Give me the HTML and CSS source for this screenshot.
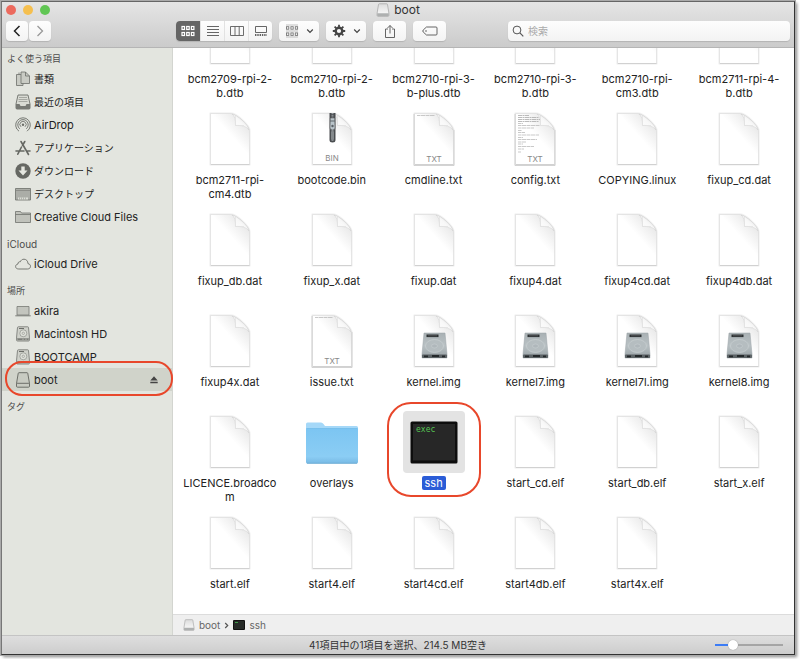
FILE: index.html
```html
<!DOCTYPE html>
<html lang="ja">
<head>
<meta charset="utf-8">
<title>boot</title>
<link rel="stylesheet" href="styles.css">
</head>
<body>
<svg class="defs" aria-hidden="true">
  <defs>
    <linearGradient id="gCorner" x1="0.55" y1="0.45" x2="0.85" y2="0.1">
      <stop offset="0" stop-color="#fff"/><stop offset="1" stop-color="#e6e6e6"/>
    </linearGradient>
    <linearGradient id="gFold" x1="0" y1="1" x2="1" y2="0">
      <stop offset="0" stop-color="#fff"/><stop offset="0.5" stop-color="#f8f8f8"/><stop offset="1" stop-color="#d8d8d8"/>
    </linearGradient>
    <linearGradient id="gDisk" x1="0" y1="0" x2="0" y2="1">
      <stop offset="0" stop-color="#a9b1b4"/><stop offset="0.5" stop-color="#b9c1c4"/><stop offset="1" stop-color="#98a1a5"/>
    </linearGradient>
    <linearGradient id="gFolder" x1="0" y1="0" x2="0" y2="1">
      <stop offset="0" stop-color="#7cc5f2"/><stop offset="0.8" stop-color="#8bcdf4"/><stop offset="1" stop-color="#77b9e4"/>
    </linearGradient>
    <linearGradient id="gDrive" x1="0" y1="0" x2="0" y2="1">
      <stop offset="0" stop-color="#dcdcdc"/><stop offset="1" stop-color="#fdfdfd"/>
    </linearGradient>
    <symbol id="doc" viewBox="0 0 62 62">
      <path d="M11.500 5.500H32C38 6 51 18 50.500 23V56.500H11.500Z" fill="none" stroke="#000" stroke-opacity=".05" stroke-width="2.500" stroke-linejoin="round"/>
      <path d="M11.500 5.500H32C38 6 51 18 50.500 23V56.500H11.500Z" fill="url(#gCorner)" stroke="#dcdcdc" stroke-width=".7"/>
      <path d="M12 56.500H50.500" stroke="#c8c8c8" stroke-width=".7"/>
      <path d="M33 6C36 8 36.500 12 36.500 17.500C42 17 48 18.500 50 22C49 16 38 7 33 6Z" fill="url(#gFold)" stroke="#cfcfcf" stroke-width=".5"/>
      <path d="M36.500 8V17.500H45" fill="none" stroke="#e2e2e2" stroke-width=".8"/>
    </symbol>
    <symbol id="txt" viewBox="0 0 62 62">
      <use href="#doc" width="62" height="62"/>
      <path d="M11 6V57.500H51V22" fill="none" stroke="#cacaca" stroke-width=".8"/>
      <text class="doc-kind" x="31" y="54" text-anchor="middle">TXT</text>
    </symbol>
    <symbol id="line" viewBox="0 0 62 62">
      <path d="M14 7.500H32" stroke="#bbb" stroke-width=".8" stroke-dasharray="3 .5 5 .5"/>
    </symbol>
    <symbol id="img" viewBox="0 0 62 62">
      <use href="#doc" width="62" height="62"/>
      <path d="M21 23H42L44 44V48H19V44Z" fill="url(#gDisk)" stroke="#9aa2a6" stroke-width=".5"/>
      <rect x="19" y="44.500" width="25" height="3.500" rx="1" fill="#5c6366"/>
      <path d="M21 46.300H25M29 46H36M39 46.300H42" stroke="#24292b" stroke-width="1.800"/>
      <rect x="23.500" y="24.500" width="12" height="2.600" fill="#2c3133"/>
      <path d="M25 25.800H34" stroke="#777" stroke-width=".5"/>
      <ellipse cx="31.500" cy="36" rx="9" ry="6.500" fill="#b5bdc0" stroke="#cdd3d5" stroke-width=".6"/>
      <ellipse cx="31.500" cy="36" rx="3" ry="2" fill="#afb7bb" stroke="#cdd3d5" stroke-width=".5"/>
    </symbol>
    <symbol id="drive" viewBox="0 0 14 14">
      <path d="M2.500 1.500Q2.600.8 3.300.8H10.700Q11.400.8 11.500 1.500L12.900 10.200V12.400Q12.900 13.300 12 13.300H2Q1.100 13.300 1.100 12.400V10.200Z" fill="url(#gDrive)" stroke="#aaa" stroke-width=".8"/>
      <path d="M1.200 10.200H12.800V12.500Q12.800 13.200 12 13.200H2Q1.200 13.200 1.200 12.500Z" fill="#aeb0b0"/>
    </symbol>
    <symbol id="hd" viewBox="0 0 16 16">
      <path d="M2.500 1.500Q2.600.8 3.300.8H12.700Q13.400.8 13.500 1.500L14.400 11V14.200Q14.400 15 13.600 15H2.400Q1.600 15 1.600 14.200V11Z" fill="#cfd1ca" stroke="#7c7e79" stroke-width=".9"/>
      <path d="M2 12H14V14.500H2Z" fill="#999b95"/>
      <path d="M4 2.500H9" stroke="#6c6e69"/>
      <circle cx="8.300" cy="7.300" r="3.500" fill="#dfe1da" stroke="#8d8f89" stroke-width=".7"/>
      <circle cx="8.300" cy="7.300" r="1.200" fill="none" stroke="#8d8f89" stroke-width=".6"/>
      <path d="M3 13.300H7M9 13.300H10M12 13.300H13" stroke="#6c6e69" stroke-width=".8"/>
    </symbol>
  </defs>
</svg>

<div class="window">
  <header class="chrome">
    <div class="titlebar">
      <div class="lights">
        <button class="light light-close" aria-label="閉じる"></button>
        <button class="light light-min" aria-label="しまう"></button>
        <button class="light light-zoom" aria-label="拡大"></button>
      </div>
      <h1 class="title"><svg width="14" height="14"><use href="#drive"/></svg>boot</h1>
    </div>
    <div class="toolbar">
      <div class="nav">
        <button class="tool tool-nav" aria-label="戻る"><svg width="22" height="20"><path d="M13.500 5L8.500 10L13.500 15" fill="none" stroke="#222" stroke-width="1.500"/></svg></button>
        <button class="tool tool-nav" aria-label="進む"><svg width="22" height="20"><path d="M8.500 5L13.500 10L8.500 15" fill="none" stroke="#999" stroke-width="1.300"/></svg></button>
      </div>
      <div class="views">
        <button class="view view-on" aria-label="アイコン"><svg width="14" height="12" fill="none" stroke="#fff" stroke-width="1.200"><rect x="1" y="1.500" width="2.500" height="3"/><rect x="5.700" y="1.500" width="2.500" height="3"/><rect x="10.400" y="1.500" width="2.500" height="3"/><rect x="1" y="7.500" width="2.500" height="3"/><rect x="5.700" y="7.500" width="2.500" height="3"/><rect x="10.400" y="7.500" width="2.500" height="3"/></svg></button>
        <button class="view" aria-label="リスト"><svg width="14" height="12"><path d="M1 1.500H13M1 4.500H13M1 7.500H13M1 10.500H13" stroke="#555" stroke-width=".9"/></svg></button>
        <button class="view" aria-label="カラム"><svg width="14" height="12"><path d="M.5 1.500H13.500V10.500H.5ZM5 1.500V10.500M9.200 1.500V10.500" fill="none" stroke="#5c5c5c" stroke-width=".9"/></svg></button>
        <button class="view" aria-label="ギャラリー"><svg width="14" height="12"><path d="M1.500 1.500H12.500V7.500H1.500Z" fill="none" stroke="#555" stroke-width=".9"/><path d="M1 10H13" stroke="#333" stroke-width="1.500" stroke-dasharray="1.400 .9"/></svg></button>
      </div>
      <button class="tool tool-menu" aria-label="グループ分け"><svg width="14" height="14" fill="none" stroke="#777" stroke-width=".9"><path d="M1 1H13M1 7H13M1 13H13" stroke="#aaa" stroke-width=".7"/><rect x="1.500" y="2.700" width="2.300" height="2.500"/><rect x="5.900" y="2.700" width="2.300" height="2.500"/><rect x="10.300" y="2.700" width="2.300" height="2.500"/><rect x="1.500" y="8.900" width="2.300" height="2.500"/><rect x="5.900" y="8.900" width="2.300" height="2.500"/><rect x="10.300" y="8.900" width="2.300" height="2.500"/></svg><svg width="8" height="6"><path d="M1.200 1.500L4 4.300L6.800 1.500" fill="none" stroke="#444" stroke-width="1.200"/></svg></button>
      <button class="tool tool-menu" aria-label="操作"><svg width="14" height="14"><circle cx="7" cy="7" r="3.300" fill="none" stroke="#444" stroke-width="2.400"/><path d="M7 .8V3M7 11V13.200M.8 7H3M11 7H13.200M2.600 2.600L4.200 4.200M9.800 9.800L11.400 11.400M2.600 11.400L4.200 9.800M9.800 4.200L11.400 2.600" stroke="#444" stroke-width="1.800"/></svg><svg width="8" height="6"><path d="M1.200 1.500L4 4.300L6.800 1.500" fill="none" stroke="#444" stroke-width="1.200"/></svg></button>
      <button class="tool tool-action" aria-label="共有"><svg width="12" height="15"><path d="M4 5H1.500V13.500H10.500V5H8M6 9.500V1.500M3.500 4L6 1.500L8.500 4" fill="none" stroke="#555" stroke-width=".9"/></svg></button>
      <button class="tool tool-action" aria-label="タグ"><svg width="16" height="10"><path d="M4.500 1H14Q15 1 15 2V8Q15 9 14 9H4.500L1.200 6Q.4 5 1.200 4Z" fill="none" stroke="#555" stroke-width=".9"/><circle cx="4" cy="5" r=".8" fill="#555"/></svg></button>
      <label class="search"><svg width="12" height="12"><circle cx="5" cy="5" r="3.900" fill="none" stroke="#555"/><path d="M7.900 7.900L11.300 11.300" stroke="#555" stroke-width="1.200"/></svg><input type="search" placeholder="検索" aria-label="検索"></label>
    </div>
  </header>

  <div class="body">
    <nav class="sidebar">
      <section>
        <h2 class="kana">よく使う項目</h2>
        <a href="#" class="kana"><svg width="16" height="16" fill="#c9cbc4" stroke="#6c6e69" stroke-width=".8"><path d="M1.500 3.500H8V14.500H1.500Z"/><path d="M6 1H10.500L14.500 5V12.500H6Z"/><path d="M10.500 1V5H14.500M4 3.500V1.500" fill="none"/></svg>書類</a>
        <a href="#" class="kana"><svg width="16" height="16"><path d="M3 1H13L15 10V14Q15 15 14 15H2Q1 15 1 14V10Z" fill="#d9dbd4" stroke="#6c6e69" stroke-width=".9"/><path d="M1 10H4.500L5.500 12H10.500L11.500 10H15V15H1Z" fill="#777974"/><path d="M4 3.500H12M3.500 5.500H12.500M3.500 7.500H12.500" stroke="#999b95" stroke-width=".8"/></svg>最近の項目</a>
        <a href="#"><svg width="16" height="16" fill="none" stroke="#6c6e69" stroke-width=".9"><path d="M4 14.200A7.300 7.300 0 1 1 12 14.200M4.700 11.800A5.200 5.200 0 1 1 11.300 11.800M6 9.800A3.100 3.100 0 1 1 10 9.800"/><circle cx="8" cy="7.800" r="1.200" fill="#6c6e69" stroke="none"/></svg>AirDrop</a>
        <a href="#" class="kana"><svg width="16" height="16" fill="none" stroke="#666863" stroke-width="1.600" stroke-linecap="round"><path d="M6 1.500L13.500 14.500M9.800 1.500L7.500 5.500M6.500 7L2.800 14.200M1 11H9M12.500 11H15"/></svg>アプリケーション</a>
        <a href="#" class="kana"><svg width="16" height="16"><circle cx="8" cy="8" r="7.700" fill="#666863"/><path d="M6.300 3.500H9.700V7.500H12.500L8 12.500L3.500 7.500H6.300Z" fill="#e5e7e0"/></svg>ダウンロード</a>
        <a href="#" class="kana"><svg width="16" height="16"><path d="M.5 2.500H15.500V14H.5Z" fill="#abada7" stroke="#777974" stroke-width=".9"/><path d="M1 4.500H15" stroke="#858781" stroke-width=".8"/><path d="M3 11.500H13V13.500H3Z" fill="#dcded7"/><path d="M4.500 11.500V13.500M6.500 11.500V13.500M8.500 11.500V13.500M10.500 11.500V13.500" stroke="#999b95" stroke-width=".6"/></svg>デスクトップ</a>
        <a href="#"><svg width="16" height="16"><path d="M.5 13.500V2.500H5.500L6.500 4H15.500V13.500Z" fill="#c0c2bb" stroke="#70726d" stroke-width=".8"/><path d="M.5 5.500H15.500" stroke="#70726d" stroke-width=".8"/></svg>Creative Cloud Files</a>
      </section>
      <section>
        <h2>iCloud</h2>
        <a href="#"><svg width="16" height="16"><path d="M3.800 13H12.500C14.500 13 15.500 11.700 15.500 10.300C15.500 8.700 14.300 7.800 13 7.700C13 4.900 11.200 3.200 9 3.200C7.200 3.200 5.900 4.200 5.300 5.800C3.800 5.500 2.800 6.600 3 8C1.500 8.300.6 9.200.6 10.500C.6 12 1.800 13 3.800 13Z" fill="none" stroke="#6c6e69" stroke-width=".9"/></svg>iCloud Drive</a>
      </section>
      <section>
        <h2 class="kana">場所</h2>
        <a href="#"><svg width="16" height="16"><path d="M2 3.500H14V12H2Z" fill="#c3c5be" stroke="#777974" stroke-width=".8"/><path d="M.3 12.800H15.700" stroke="#777974"/></svg>akira</a>
        <a href="#"><svg width="16" height="16"><use href="#hd"/></svg>Macintosh HD</a>
        <a href="#"><svg width="16" height="16"><use href="#hd"/></svg>BOOTCAMP</a>
        <a href="#" class="current"><svg width="16" height="16"><path d="M3.200 1.500Q3.300.7 4 .7H12Q12.700.7 12.800 1.500L14.500 11.500V14.200Q14.500 15.200 13.500 15.200H2.500Q1.500 15.200 1.500 14.200V11.500ZM1.500 12Q1.800 11.300 2.500 11.300H13.500Q14.300 11.300 14.500 12" fill="#c8cbc2" stroke="#62645f" stroke-width=".9"/></svg>boot<svg class="eject" width="8" height="8"><path d="M4 .3L7.700 4.500H.3ZM.3 5.800H7.700V7.300H.3Z" fill="#444"/></svg><span class="ring ring-row"></span></a>
      </section>
      <section>
        <h2 class="kana">タグ</h2>
      </section>
    </nav>

    <main class="content">
      <div class="viewport">
        <div class="files">
          <button class="file"><svg><use href="#doc"/></svg><span>bcm2709-rpi-2-b.dtb</span></button>
          <button class="file"><svg><use href="#doc"/></svg><span>bcm2710-rpi-2-b.dtb</span></button>
          <button class="file"><svg><use href="#doc"/></svg><span>bcm2710-rpi-3-b-plus.dtb</span></button>
          <button class="file"><svg><use href="#doc"/></svg><span>bcm2710-rpi-3-b.dtb</span></button>
          <button class="file"><svg><use href="#doc"/></svg><span>bcm2710-rpi-cm3.dtb</span></button>
          <button class="file"><svg><use href="#doc"/></svg><span>bcm2711-rpi-4-b.dtb</span></button>

          <button class="file"><svg><use href="#doc"/></svg><span>bcm2711-rpi-cm4.dtb</span></button>
          <button class="file"><svg><use href="#doc"/><path d="M28.500 5H34.500V32Q34.500 34.500 31.500 34.500Q28.500 34.500 28.500 32Z" fill="#4a4d50"/><path d="M31.500 5V11M31.500 22V33" stroke="#9aa0a4" stroke-width="2" stroke-dasharray="1 .7"/><path d="M29.300 10H33.700L34 20Q34 22 31.500 22Q29 22 29 20Z" fill="#b9c4ca" stroke="#555" stroke-width=".5"/><path d="M29 13H34" stroke="#60686d"/><circle cx="31.500" cy="18" r="1.200" fill="#5a6166"/><rect x="30" y="23" width="3" height="9" rx="1" fill="#84898c"/><text class="doc-kind" x="31" y="53" text-anchor="middle">BIN</text></svg><span>bootcode.bin</span></button>
          <button class="file"><svg><use href="#txt"/><use href="#line"/></svg><span>cmdline.txt</span></button>
          <button class="file"><svg><use href="#txt"/><g fill="none" stroke="#aaa" stroke-width=".8"><path d="M14 7.500H25M14 9.500H35M14 11.500H36M14 13.500H35" stroke-dasharray="4 .5 2 .5"/><path d="M14 15.500H19M14 17.500H36M14 20H30M14 22.500H18M14 24.500H21M14 27H35M14 29.500H19M14 31.500H33M14 34H22M14 36H19M14 38.500H30M14 41H20M14 44H17" stroke="#bbb" stroke-dasharray="3 .5 5 .5"/></g></svg><span>config.txt</span></button>
          <button class="file"><svg><use href="#doc"/></svg><span>COPYING.linux</span></button>
          <button class="file"><svg><use href="#doc"/></svg><span>fixup_cd.dat</span></button>

          <button class="file"><svg><use href="#doc"/></svg><span>fixup_db.dat</span></button>
          <button class="file"><svg><use href="#doc"/></svg><span>fixup_x.dat</span></button>
          <button class="file"><svg><use href="#doc"/></svg><span>fixup.dat</span></button>
          <button class="file"><svg><use href="#doc"/></svg><span>fixup4.dat</span></button>
          <button class="file"><svg><use href="#doc"/></svg><span>fixup4cd.dat</span></button>
          <button class="file"><svg><use href="#doc"/></svg><span>fixup4db.dat</span></button>

          <button class="file"><svg><use href="#doc"/></svg><span>fixup4x.dat</span></button>
          <button class="file"><svg><use href="#txt"/><use href="#line"/></svg><span>issue.txt</span></button>
          <button class="file"><svg><use href="#img"/></svg><span>kernel.img</span></button>
          <button class="file"><svg><use href="#img"/></svg><span>kernel7.img</span></button>
          <button class="file"><svg><use href="#img"/></svg><span>kernel7l.img</span></button>
          <button class="file"><svg><use href="#img"/></svg><span>kernel8.img</span></button>

          <button class="file"><svg><use href="#doc"/></svg><span>LICENCE.broadcom</span></button>
          <button class="file"><svg><path d="M5 20V13Q5 11.500 6.500 11.500H20Q21.500 11.500 22.500 13L24 15H55.500Q57 15 57 16.500V20Z" fill="#a5d8f8"/><path d="M5 17.500H57V51Q57 52.500 55.500 52.500H6.500Q5 52.500 5 51Z" fill="url(#gFolder)"/><path d="M5.500 17.500H56.500" stroke="#6db9e8" stroke-width=".7"/><path d="M6 52.300H56" stroke="#6aa9d2" stroke-width=".8"/></svg><span>overlays</span></button>
          <button class="file selected"><svg><rect x="7.500" y="10.500" width="47" height="42" rx="1.500" fill="#0d0d0d"/><rect x="10" y="13" width="42" height="36.500" fill="#272727"/><text class="exec" x="13" y="21">exec</text></svg><span>ssh</span><i class="ring ring-file"></i></button>
          <button class="file"><svg><use href="#doc"/></svg><span>start_cd.elf</span></button>
          <button class="file"><svg><use href="#doc"/></svg><span>start_db.elf</span></button>
          <button class="file"><svg><use href="#doc"/></svg><span>start_x.elf</span></button>

          <button class="file"><svg><use href="#doc"/></svg><span>start.elf</span></button>
          <button class="file"><svg><use href="#doc"/></svg><span>start4.elf</span></button>
          <button class="file"><svg><use href="#doc"/></svg><span>start4cd.elf</span></button>
          <button class="file"><svg><use href="#doc"/></svg><span>start4db.elf</span></button>
          <button class="file"><svg><use href="#doc"/></svg><span>start4x.elf</span></button>
        </div>
      </div>
      <div class="pathbar">
        <svg width="12" height="12" viewBox="0 0 14 14"><use href="#drive" width="14" height="14"/></svg><a href="#">boot</a>
        <svg class="sep" width="5" height="7"><path d="M1.200 1L3.700 3.500L1.200 6" fill="none" stroke="#555" stroke-width="1.200"/></svg>
        <svg width="12" height="10"><rect width="12" height="10" rx="1" fill="#111"/><rect x="1" y="1" width="10" height="8" fill="#262a27"/><path d="M2 2.500H5" stroke="#3f9a48"/></svg><a href="#">ssh</a>
      </div>
    </main>
  </div>

  <footer class="status">
    <p>41項目中の1項目を選択、214.5 MB空き</p>
    <input class="zoom" type="range" min="0" max="100" value="22" aria-label="アイコンサイズ">
  </footer>
</div>
</body>
</html>
```
FILE: styles.css
```css
* {
  box-sizing: border-box;
}

body {
  margin: 0;
  height: 100vh;
  padding: 1px 5px 4px 1px;
  background: #fff;
  font-family: Inter, "Noto Sans CJK JP", sans-serif;
  font-size: 11px;
  color: #222;
}

h1, h2, p {
  margin: 0;
  font-weight: 400;
}

button {
  border: 0;
  padding: 0;
  font: inherit;
  color: inherit;
}

a {
  color: inherit;
  text-decoration: none;
}

svg {
  flex: none;
}

.defs {
  position: absolute;
  width: 0;
  height: 0;
}

.window {
  display: flex;
  flex-direction: column;
  height: 100%;
  border: 1px solid #333;
  border-top-color: #666;
  border-left-color: #777;
  box-shadow: 0 0 0 1px #aaa, 2px 2px 3px #888;
}

/* title bar and toolbar */

.chrome {
  flex: none;
  height: 46px;
  padding: 0 4px;
  background: linear-gradient(#e5e5e5, #cbcbcb);
  border-bottom: 1px solid #b5b5b5;
}

.titlebar {
  display: grid;
  grid-template-columns: 1fr auto 1fr;
  align-items: center;
  height: 16px;
}

.lights {
  display: flex;
  gap: 7px;
}

.light {
  width: 10px;
  height: 10px;
  border-radius: 50%;
}

.light-close { background: #ec6a5e; }
.light-min { background: #f5bf4f; }
.light-zoom { background: #61c654; }

.title {
  display: flex;
  align-items: center;
  gap: 4px;
  font-size: 12px;
  line-height: 14px;
  color: #333;
}

.toolbar {
  display: flex;
  align-items: center;
  gap: 7px;
  margin-top: 3px;
}

.nav {
  display: flex;
  gap: 1px;
  margin-right: 118px;
}

.tool,
.views,
.search {
  display: flex;
  align-items: center;
  justify-content: center;
  height: 20px;
  border-radius: 4px;
  background: linear-gradient(#fdfdfd, #f3f3f3);
  box-shadow: 0 1px 1px #b4b4b4;
}

.tool-nav { width: 22px; }
.tool-menu { width: 40px; gap: 7px; }
.tool-action { width: 33px; }

.views {
  overflow: hidden;
}

.view {
  display: grid;
  place-items: center;
  width: 24px;
  height: 20px;
  background: none;
  border-left: 1px solid #e2e2e2;
}

.view-on {
  background: #656565;
  border: 0;
}

.search {
  flex: 1;
  gap: 4px;
  margin-left: 55px;
  padding: 0 4px;
}

.search input {
  flex: 1;
  min-width: 0;
  padding: 0;
  border: 0;
  outline: 0;
  background: none;
  font: inherit;
  font-size: 10px;
}

.search input::placeholder {
  color: #aaa;
}

/* sidebar */

.body {
  display: flex;
  flex: 1;
  min-height: 0;
}

.sidebar {
  flex: none;
  width: 171px;
  padding-top: 3px;
  background: #e3e5df;
  border-right: 1px solid #d3d5d0;
}

.sidebar section {
  margin-bottom: 8px;
}

.sidebar h2 {
  padding-left: 5px;
  font-size: 10px;
  line-height: 16px;
  color: #4c4c4c;
}

.sidebar h2.kana {
  font-size: 9px;
}

.sidebar a {
  position: relative;
  display: flex;
  align-items: center;
  gap: 3px;
  height: 23px;
  padding: 0 14px 0 13px;
}

.sidebar a.kana {
  font-size: 10px;
}

.sidebar .current {
  background: #d0d3ca;
}

.sidebar .eject {
  margin-left: auto;
}

.ring {
  position: absolute;
  z-index: 1;
  border: 2px solid #e8472b;
  pointer-events: none;
}

.ring-row {
  inset: -7px -1px -5px 3px;
  border-radius: 17px;
}

.ring-file {
  inset: -9px 4px auto;
  height: 95px;
  border-radius: 24px;
}

/* file grid, scrolled to its end */

.content {
  display: flex;
  flex: 1;
  flex-direction: column;
  min-width: 0;
  background: #fff;
}

.viewport {
  display: flex;
  flex: 1;
  flex-direction: column;
  justify-content: flex-end;
  min-height: 0;
  overflow: hidden;
}

.files {
  display: grid;
  grid-template-columns: repeat(6, 1fr);
  grid-auto-rows: 101px;
  padding: 0 4px 1px 6px;
}

.file {
  position: relative;
  display: flex;
  flex-direction: column;
  align-items: center;
  gap: 3px;
  background: none;
  line-height: 14px;
}

.file svg {
  width: 62px;
  height: 62px;
  border-radius: 4px;
}

.file span {
  max-width: 100px;
  padding: 0 3px;
  border-radius: 2px;
  overflow-wrap: anywhere;
}

.selected svg {
  background: #e3e3e3;
}

.selected span {
  background: #2a5cd7;
  color: #fff;
}

.doc-kind {
  font-size: 8px;
  fill: #888;
}

.exec {
  font-family: "DejaVu Sans Mono", monospace;
  font-size: 8px;
  fill: #56c653;
}

/* path and status bars */

.pathbar {
  display: flex;
  flex: none;
  align-items: center;
  gap: 4px;
  height: 21px;
  padding-left: 10px;
  background: #efefef;
  border-top: 1px solid #dcdcdc;
  font-size: 10px;
  color: #666;
}

.status {
  display: grid;
  grid-template-columns: 1fr auto 1fr;
  flex: none;
  align-items: center;
  height: 19px;
  padding: 0 11px;
  background: linear-gradient(#dedede, #cdcdcd);
  border-top: 1px solid #c4c4c4;
  font-size: 10px;
  line-height: 14px;
  color: #333;
}

.status p {
  grid-column: 2;
}

.zoom {
  justify-self: end;
  width: 68px;
  height: 12px;
  margin: 0;
  appearance: none;
  background: linear-gradient(90deg, #3b7cf6 25%, #a5a5a5 25%) center / 100% 2px no-repeat;
}

.zoom::-webkit-slider-thumb {
  appearance: none;
  width: 10px;
  height: 10px;
  border-radius: 50%;
  background: #fff;
  box-shadow: 0 0 1px #777;
}
```
